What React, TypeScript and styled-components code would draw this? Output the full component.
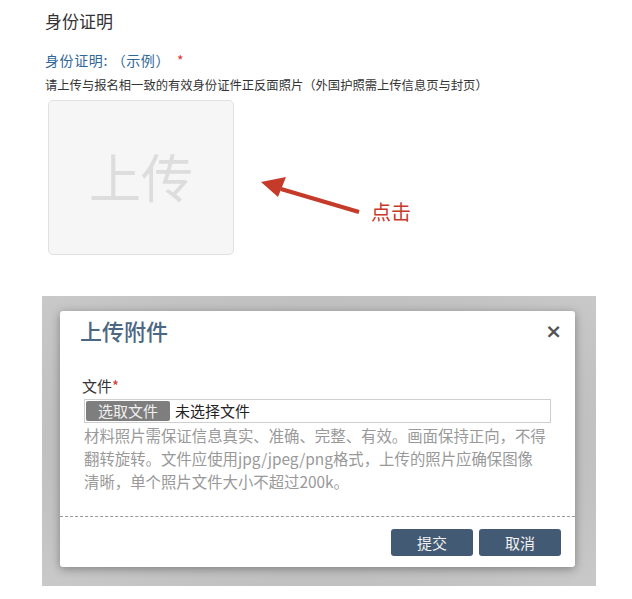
import React from 'react';
import styled, { createGlobalStyle } from 'styled-components';

const GlobalStyle = createGlobalStyle`
	html, body {
		margin: 0;
		padding: 0;
		background: #ffffff;
	}
	body {
		font-family: "Noto Sans CJK SC", "Noto Sans", sans-serif;
		color: #333333;
	}
`;

// the help text wraps at these points in the original
const helpLines = [
	'材料照片需保证信息真实、准确、完整、有效。画面保持正向，不得',
	'翻转旋转。文件应使用jpg/jpeg/png格式，上传的照片应确保图像',
	'清晰，单个照片文件大小不超过200k。',
];

const App = () => {
	return (
		<>
			<GlobalStyle />
			<Page>
				<Section>
					<Title>身份证明</Title>
					<FieldLabel>
						身份证明: （示例）<Required>*</Required>
					</FieldLabel>
					<Hint>请上传与报名相一致的有效身份证件正反面照片（外国护照需上传信息页与封页）</Hint>
					<UploadRow>
						<UploadBox>上传</UploadBox>
						<Pointer>
							<svg width="100" height="48" viewBox="0 0 100 48">
								<path d="M 98 35 L 20 12" stroke="#c53a29" strokeWidth="4" fill="none" />
								<path d="M 0 5 L 25 0 L 17 20 Z" fill="#c53a29" />
							</svg>
							<ClickText>点击</ClickText>
						</Pointer>
					</UploadRow>
				</Section>

				<Backdrop>
					<Modal>
						<ModalHeader>
							<ModalTitle>上传附件</ModalTitle>
							<CloseButton>×</CloseButton>
						</ModalHeader>
						<ModalBody>
							<FileLabel>
								文件<Star>*</Star>
							</FileLabel>
							<FileInput>
								<ChooseButton>选取文件</ChooseButton>
								<FileName>未选择文件</FileName>
							</FileInput>
							<HelpText>
								{helpLines.map((line) => (
									<HelpLine key={line}>{line}</HelpLine>
								))}
							</HelpText>
						</ModalBody>
						<ModalFooter>
							<ActionButton>提交</ActionButton>
							<ActionButton>取消</ActionButton>
						</ModalFooter>
					</Modal>
				</Backdrop>
			</Page>
		</>
	);
};

const Page = styled.div`
	width: 632px;
	height: 599px;
	overflow: hidden;
	padding-top: 9px;
	box-sizing: border-box;
`;

const Section = styled.div`
	padding-left: 45px;
`;

const Title = styled.div`
	font-size: 17px;
	line-height: 24px;
	color: #333333;
`;

const FieldLabel = styled.div`
	margin-top: 17px;
	font-size: 14px;
	line-height: 20px;
	color: #2f6799;
	letter-spacing: 0.6px;
`;

const Required = styled.span`
	color: #d9342b;
	margin-left: 7px;
`;

const Hint = styled.div`
	margin-top: 6px;
	font-size: 12.3px;
	line-height: 18px;
	color: #333333;
	white-space: nowrap;
`;

const UploadRow = styled.div`
	display: flex;
	align-items: flex-start;
	margin-top: 6px;
	margin-left: 3px;
`;

const UploadBox = styled.div`
	width: 186px;
	height: 155px;
	box-sizing: border-box;
	padding-bottom: 4px;
	background: #f6f6f6;
	border: 1px solid #e0e0e0;
	border-radius: 5px;
	display: flex;
	align-items: center;
	justify-content: center;
	font-size: 52px;
	color: #dddddd;
`;

const Pointer = styled.div`
	display: flex;
	align-items: flex-start;
	margin-top: 77px;
	margin-left: 27px;
`;

const ClickText = styled.div`
	margin-top: 23px;
	margin-left: 10px;
	font-size: 20px;
	line-height: 24px;
	color: #c53a29;
`;

const Backdrop = styled.div`
	margin-top: 41px;
	margin-left: 42px;
	width: 554px;
	height: 290px;
	box-sizing: border-box;
	padding: 15px 21px 0 18px;
	background: radial-gradient(ellipse at center, #b9b9b9 0%, #c1c1c1 70%, #c9c9c9 100%);
`;

const Modal = styled.div`
	width: 515px;
	height: 256px;
	box-sizing: border-box;
	background: #ffffff;
	border-radius: 3px;
	box-shadow: 0 2px 10px rgba(0, 0, 0, 0.35);
	display: flex;
	flex-direction: column;
`;

const ModalHeader = styled.div`
	display: flex;
	align-items: flex-start;
	justify-content: space-between;
	padding: 5px 13px 0 20px;
	height: 39px;
`;

const ModalTitle = styled.div`
	font-size: 22px;
	line-height: 28px;
	font-weight: 500;
	color: #4b6783;
`;

const CloseButton = styled.div`
	font-family: "DejaVu Sans", sans-serif;
	font-size: 20px;
	font-weight: bold;
	line-height: 20px;
	color: #555555;
	margin-top: 5px;
`;

const ModalBody = styled.div`
	padding: 20px 24px 0 24px;
	flex: 1;
`;

const FileLabel = styled.div`
	font-size: 15px;
	line-height: 22px;
	color: #333333;
	margin-left: -2px;
`;

const Star = styled.span`
	color: #d9342b;
`;

const FileInput = styled.div`
	display: flex;
	align-items: center;
	height: 24px;
	box-sizing: border-box;
	margin-top: 2px;
	border: 1px solid #cfcfcf;
	padding: 1px;
`;

const ChooseButton = styled.div`
	height: 20px;
	padding: 0 12px;
	background: #7e7e7e;
	border-radius: 2px;
	color: #f0f0f0;
	font-size: 15px;
	line-height: 20px;
`;

const FileName = styled.div`
	margin-left: 5px;
	font-size: 15px;
	line-height: 20px;
	color: #222222;
`;

const HelpText = styled.div`
	margin-top: 1px;
	font-size: 15.4px;
	line-height: 23px;
	color: #999999;
`;

const HelpLine = styled.div`
	white-space: nowrap;
`;

const ModalFooter = styled.div`
	display: flex;
	justify-content: flex-end;
	gap: 6px;
	border-top: 1px dashed #999999;
	padding: 12px 14px 11px 0;
`;

const ActionButton = styled.div`
	width: 82px;
	height: 27px;
	border-radius: 3px;
	background: #435a74;
	color: #f2f2f2;
	font-size: 15px;
	line-height: 27px;
	text-align: center;
`;

export default App;
